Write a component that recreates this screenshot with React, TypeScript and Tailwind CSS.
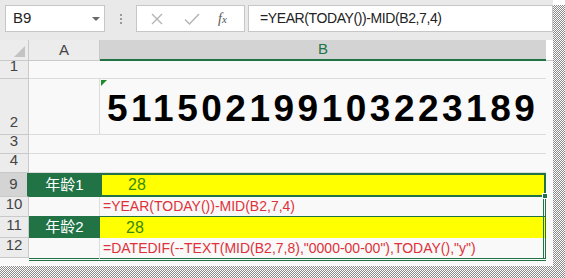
import React from 'react';

const ui = "font-['Liberation_Sans','Noto_Sans_CJK_SC',sans-serif]";

function RowHead({ n, h, active }: { n: string; h: string; active?: boolean }) {
  return (
    <div
      className={`${h} w-[29px] shrink-0 flex items-end justify-center pb-[1px] border-b border-r border-[#c9c9c9] text-[15px] text-[#444] ${
        active ? 'bg-[#d4d4d4] border-r-[#217346] border-r-2' : 'bg-[#ececec]'
      }`}
    >
      {n}
    </div>
  );
}

export default function App() {
  return (
    <div className={`w-[565px] h-[278px] flex bg-white overflow-hidden ${ui}`}>
      <div className="w-[553px] flex flex-col">
        {/* formula bar */}
        <div className="h-[40px] shrink-0 bg-[#e9e9e9] flex items-start pt-[5px] pl-[5px]">
          <div className="w-[100px] h-[27px] bg-white border border-[#c6c6c6] flex items-center pl-[7px] pr-[4px]">
            <span className="text-[15px] text-[#222]">B9</span>
            <span className="ml-auto w-0 h-0 border-l-[4px] border-r-[4px] border-t-[4px] border-l-transparent border-r-transparent border-t-[#666]" />
          </div>
          <div className="w-[31px] h-[27px] flex flex-col items-center justify-center gap-[2px]">
            <span className="w-[2px] h-[2px] bg-[#9a9a9a]" />
            <span className="w-[2px] h-[2px] bg-[#9a9a9a]" />
            <span className="w-[2px] h-[2px] bg-[#9a9a9a]" />
          </div>
          <div className="w-[109px] h-[27px] bg-white border border-[#c6c6c6] flex items-center">
            <svg width="14" height="14" viewBox="0 0 14 14" className="ml-[13px]">
              <path d="M2 2L12 12M12 2L2 12" stroke="#b4b4b4" strokeWidth="1.4" />
            </svg>
            <svg width="16" height="14" viewBox="0 0 16 14" className="ml-[20px]">
              <path d="M1 7.5L5.5 12L15 2" stroke="#b4b4b4" strokeWidth="1.4" fill="none" />
            </svg>
            <span className="ml-[18px] text-[14px] italic text-[#555] font-['Liberation_Serif',serif]">
              f<span className="text-[11px]">x</span>
            </span>
          </div>
          <div className="ml-[3px] flex-1 h-[27px] bg-white border border-[#c6c6c6] flex items-center pl-[11px]">
            <span className="text-[14px] tracking-[-0.4px] text-[#222]">=YEAR(TODAY())-MID(B2,7,4)</span>
          </div>
        </div>

        {/* column headers */}
        <div className="h-[21px] shrink-0 flex bg-[#ececec]">
          <div className="w-[29px] border-r border-b border-[#c9c9c9] flex items-end justify-end p-[3px]">
            <svg width="11" height="11" viewBox="0 0 11 11">
              <path d="M11 0V11H0Z" fill="#c3c3c3" />
            </svg>
          </div>
          <div className="w-[71px] border-r border-b border-[#c9c9c9] flex items-center justify-center text-[15px] text-[#444]">
            A
          </div>
          <div className="w-[446px] bg-[#d3d3d3] border-b-2 border-[#217346] flex items-center justify-center text-[15px] text-[#217346]">
            B
          </div>
          <div className="flex-1 bg-white border-b border-[#c9c9c9]" />
        </div>

        {/* rows 1-4 */}
        <div className="flex bg-[#f9f9f9]">
          <RowHead n="1" h="h-[18px]" />
          <div className="w-[517px] border-b border-[#dcdcdc]" />
        </div>
        <div className="flex bg-[#f9f9f9]">
          <RowHead n="2" h="h-[56px]" />
          <div className="w-[71px] border-b border-r border-[#dcdcdc]" />
          <div className="w-[446px] border-b border-[#dcdcdc] relative flex items-center pl-[7px] pt-[3px]">
            <span className="absolute left-[1px] top-[1px] w-0 h-0 border-t-[6px] border-r-[6px] border-t-[#1e8a2a] border-r-transparent" />
            <span className="text-[37px] font-bold text-black tracking-[3.5px] leading-none">511502199103223189</span>
          </div>
        </div>
        <div className="flex bg-[#f9f9f9]">
          <RowHead n="3" h="h-[19px]" />
          <div className="w-[517px] border-b border-[#dcdcdc]" />
        </div>
        <div className="flex bg-[#f9f9f9]">
          <RowHead n="4" h="h-[19px]" />
          <div className="w-[517px] border-b border-[#dcdcdc]" />
        </div>

        {/* rows 9-12 */}
        <div className="flex bg-[#f9f9f9]">
          <div className="flex flex-col">
            <RowHead n="9" h="h-[24px]" active />
            <RowHead n="10" h="h-[20px]" />
            <RowHead n="11" h="h-[21px]" />
            <RowHead n="12" h="h-[20px]" />
          </div>
          <div className="w-[517px] flex flex-col border-b-[3px] border-double border-[#217346] h-[88px]">
            <div className="h-[24px] flex">
              <div className="w-[71px] bg-[#217346] flex items-center justify-center text-[15px] text-white">年龄1</div>
              <div className="w-[446px] bg-[#ffff00] border-2 border-[#217346] relative flex items-center pl-[26px]">
                <span className="text-[16px] text-[#3a8a00]">28</span>
                <span className="absolute right-[-4px] bottom-[-4px] w-[6px] h-[6px] bg-[#217346] border border-white" />
              </div>
            </div>
            <div className="h-[20px] flex border-b border-[#217346]">
              <div className="w-[71px] border-r border-[#dcdcdc]" />
              <div className="w-[446px] border-r-[3px] border-double border-[#217346] flex items-center pl-[3px] text-[14px] text-[#e0313a]">
                =YEAR(TODAY())-MID(B2,7,4)
              </div>
            </div>
            <div className="h-[21px] flex">
              <div className="w-[71px] bg-[#217346] flex items-center justify-center text-[15px] text-white">年龄2</div>
              <div className="w-[446px] bg-[#ffff00] border-r-[3px] border-double border-[#217346] flex items-center pl-[26px]">
                <span className="text-[16px] text-[#3a8a00]">28</span>
              </div>
            </div>
            <div className="flex-1 flex">
              <div className="w-[71px] border-r border-[#dcdcdc]" />
              <div className="w-[446px] border-r-[3px] border-double border-[#217346] flex items-center pl-[3px] text-[14px] text-[#e0313a] whitespace-nowrap">
                =DATEDIF(--TEXT(MID(B2,7,8),"0000-00-00"),TODAY(),"y")
              </div>
            </div>
          </div>
        </div>
        <div className="h-[5px] bg-[#f9f9f9]" />
        <div className="flex-1 bg-[repeating-conic-gradient(#8a8a8a_0_25%,#ffffff_0_50%)] bg-[length:2px_2px]" />
      </div>
      <div className="flex-1 flex flex-col">
        <div className="h-[5px] bg-white" />
        <div className="flex-1 bg-[repeating-conic-gradient(#8a8a8a_0_25%,#ffffff_0_50%)] bg-[length:2px_2px]" />
      </div>
    </div>
  );
}
